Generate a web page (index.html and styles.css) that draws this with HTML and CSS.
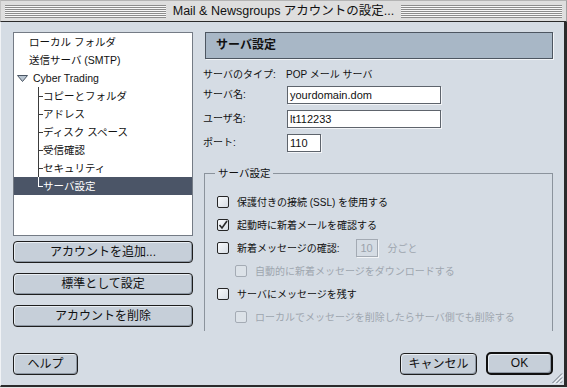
FILE: index.html
```html
<!DOCTYPE html>
<html lang="ja">
<head>
<meta charset="utf-8">
<title>Mail &amp; Newsgroups アカウントの設定</title>
<link rel="stylesheet" href="styles.css">
</head>
<body>
<div class="window">
  <div class="titlebar">
    <span class="stripes"></span>
    <span class="title">Mail &amp; Newsgroups アカウントの設定...</span>
    <span class="stripes"></span>
  </div>
  <div class="frame">
    <div class="main">
      <div class="left">
        <div class="tree">
          <div class="row top">ローカル フォルダ</div>
          <div class="row top">送信サーバ (SMTP)</div>
          <div class="row acct"><svg class="disclose" width="11" height="7" viewBox="0 0 11 7"><path d="M0.5 0.5 H10.5 L5.5 6.5 Z" fill="#b9c5d1" stroke="#4a5563" stroke-linejoin="round"/></svg>Cyber Trading</div>
          <div class="row child"><span class="tick"></span>コピーとフォルダ</div>
          <div class="row child"><span class="tick"></span>アドレス</div>
          <div class="row child"><span class="tick"></span>ディスク スペース</div>
          <div class="row child"><span class="tick"></span>受信確認</div>
          <div class="row child"><span class="tick"></span>セキュリティ</div>
          <div class="row child last sel"><span class="tick"></span>サーバ設定</div>
        </div>
        <div class="acts">
          <button class="btn">アカウントを追加...</button>
          <button class="btn">標準として設定</button>
          <button class="btn">アカウントを削除</button>
        </div>
      </div>
      <div class="right">
        <div class="header">サーバ設定</div>
        <div class="fields">
          <span class="lbl">サーバのタイプ:</span><span class="val">POP メール サーバ</span>
          <span class="lbl">サーバ名:</span><span class="input wide">yourdomain.dom</span>
          <span class="lbl">ユーザ名:</span><span class="input wide">lt112233</span>
          <span class="lbl">ポート:</span><span class="input port">110</span>
        </div>
        <fieldset class="group">
          <legend>サーバ設定</legend>
          <div class="opt"><span class="cb"></span>保護付きの接続 (SSL) を使用する</div>
          <div class="opt"><span class="cb"><svg width="10" height="10" viewBox="0 0 10 10"><path d="M1.5 5 L4 8 L9 1" fill="none" stroke="#2a2a2a" stroke-width="1.6"/></svg></span>起動時に新着メールを確認する</div>
          <div class="opt"><span class="cb"></span>新着メッセージの確認:<span class="mini">10</span><span class="distext">分ごと</span></div>
          <div class="opt sub dis"><span class="cb"></span>自動的に新着メッセージをダウンロードする</div>
          <div class="opt"><span class="cb"></span>サーバにメッセージを残す</div>
          <div class="opt sub dis"><span class="cb"></span>ローカルでメッセージを削除したらサーバ側でも削除する</div>
        </fieldset>
      </div>
    </div>
    <div class="footer">
      <button class="btn help">ヘルプ</button>
      <button class="btn cancel">キャンセル</button>
      <button class="btn ok">OK</button>
    </div>
  </div>
  <svg class="grow" width="13" height="13" viewBox="0 0 13 13"><path d="M12 2.5 L2.5 12 M12 6.5 L6.5 12 M12 10.5 L10.5 12" stroke="#6c747e"/><path d="M13 3.5 L3.5 13 M13 7.5 L7.5 13" stroke="#ffffff"/></svg>
</div>
</body>
</html>
```
FILE: styles.css
```css
body {
  margin: 0;
  background: #ffffff;
}

.window {
  width: 567px;
  height: 388px;
  box-sizing: border-box;
  padding-bottom: 1px;
  display: flex;
  flex-direction: column;
  background: #e4e4e4;
  font-family: "Liberation Sans", "Noto Sans CJK JP", sans-serif;
  color: #111111;
  position: relative;
  overflow: hidden;
}

.titlebar {
  height: 22px;
  flex: none;
  box-sizing: border-box;
  display: flex;
  align-items: center;
  gap: 5px;
  padding: 0 4px;
  background: #dedede;
  border-top: 1px solid #b4b4b4;
  border-left: 1px solid #c4c4c4;
  border-right: 1px solid #a0a0a0;
  border-bottom: 1px solid #2a2a2a;
}

.stripes {
  flex: 1;
  height: 13px;
  background: repeating-linear-gradient(to bottom, #8c8c8c 0 1px, #f7f7f7 1px 2px);
}

.title {
  font-size: 12.5px;
  line-height: 16px;
  white-space: nowrap;
  padding: 0 2px;
}

.frame {
  flex: 1;
  min-height: 0;
  display: flex;
  flex-direction: column;
  background: #d5dce4;
  border-left: 1px solid #f1f3f6;
  border-right: 3px solid #2b2b2b;
  border-bottom: 2px solid #2b2b2b;
  padding: 10px 0 0 12px;
}

.main {
  display: flex;
}

.left {
  width: 180px;
  flex: none;
  display: flex;
  flex-direction: column;
}

.tree {
  height: 204px;
  box-sizing: border-box;
  background: #ffffff;
  border: 1px solid #747b85;
  font-size: 10.5px;
}

.row {
  height: 18px;
  display: flex;
  align-items: center;
  line-height: 18px;
  white-space: nowrap;
}

.row.top {
  padding-left: 15px;
}

.row.acct {
  padding-left: 3px;
}

.disclose {
  flex: none;
  margin-right: 5px;
}

.row.child {
  padding-left: 24px;
}

.tick {
  width: 5px;
  height: 18px;
  flex: none;
  background:
    linear-gradient(#3c3c3c, #3c3c3c) 0 0 / 1px 100% no-repeat,
    linear-gradient(#3c3c3c, #3c3c3c) 0 9px / 5px 1px no-repeat;
}

.row.last .tick {
  background-size: 1px 10px, 5px 1px;
}

.row.sel {
  background: #4b5567;
  color: #ffffff;
}

.row.sel .tick {
  background-image: linear-gradient(#ffffff, #ffffff), linear-gradient(#ffffff, #ffffff);
}

.acts {
  display: flex;
  flex-direction: column;
  gap: 10px;
  margin-top: 5px;
}

.btn {
  height: 22px;
  box-sizing: border-box;
  padding: 0;
  font-family: "Liberation Sans", "Noto Sans CJK JP", sans-serif;
  font-size: 12px;
  line-height: 20px;
  color: #111111;
  background: #c6cfd9;
  border: 1px solid #1e1e1e;
  border-radius: 4px;
  box-shadow: inset 1px 1px 0 #e9eef3, inset -1px -1px 0 #8e98a4;
}

.acts .btn {
  width: 180px;
}

.right {
  width: 350px;
  flex: none;
  margin-left: 10px;
  display: flex;
  flex-direction: column;
}

.header {
  margin-left: 2px;
  height: 27px;
  box-sizing: border-box;
  border: 1px solid #4d5661;
  background: #a8b7c6;
  box-shadow: 1px 1px 0 #f3f5f8;
  font-size: 12px;
  font-weight: bold;
  line-height: 25px;
  padding-left: 10px;
}

.fields {
  display: grid;
  grid-template-columns: 84px auto;
  grid-template-rows: 14px 18px 18px 18px;
  row-gap: 6px;
  margin-top: 7px;
  font-size: 10px;
  align-items: start;
}

.lbl,
.val {
  line-height: 18px;
  white-space: nowrap;
}

.val {
  margin-left: -1px;
}

.input {
  justify-self: start;
  height: 18px;
  box-sizing: border-box;
  background: #ffffff;
  border: 1px solid #5e646c;
  box-shadow: 1px 1px 0 #f3f5f8;
  font-size: 11px;
  line-height: 16px;
  padding-left: 2px;
}

.input.wide {
  width: 154px;
}

.input.port {
  width: 34px;
}

.group {
  margin: 14px 0 0 1px;
  padding: 10px 0 3px 12px;
  border: 1px solid #8b939c;
  border-bottom: none;
  min-inline-size: 0;
  font-size: 10px;
}

.group legend {
  font-size: 10.5px;
  line-height: 14px;
  padding: 0 3px;
  margin-left: -2px;
}

.opt {
  height: 23px;
  display: flex;
  align-items: center;
  white-space: nowrap;
}

.opt.sub {
  padding-left: 18px;
}

.cb {
  width: 12px;
  height: 12px;
  box-sizing: border-box;
  flex: none;
  margin-right: 8px;
  border: 1px solid #262626;
  border-radius: 2px;
  background: linear-gradient(135deg, #f8fafc, #d8dee5);
  display: flex;
  align-items: center;
  justify-content: center;
}

.dis {
  color: #9ea6af;
}

.dis .cb {
  border-color: #a4abb4;
  background: #dce2e8;
}

.mini {
  width: 22px;
  height: 18px;
  box-sizing: border-box;
  margin-left: 16px;
  margin-right: 10px;
  border: 1px solid #a3aab3;
  box-shadow: 1px 1px 0 #f3f5f8;
  color: #9aa2ab;
  font-size: 11px;
  line-height: 16px;
  text-align: center;
}

.distext {
  color: #9ea6af;
}

.footer {
  margin-top: auto;
  display: flex;
  align-items: center;
  padding: 0 11px 10px 0;
}

.help {
  width: 65px;
}

.cancel {
  width: 77px;
  margin-left: auto;
}

.ok {
  width: 67px;
  height: 23px;
  margin-left: 9px;
  border: 2px solid #111111;
  border-radius: 5px;
  line-height: 19px;
}

.grow {
  position: absolute;
  right: 4px;
  bottom: 4px;
}
```
